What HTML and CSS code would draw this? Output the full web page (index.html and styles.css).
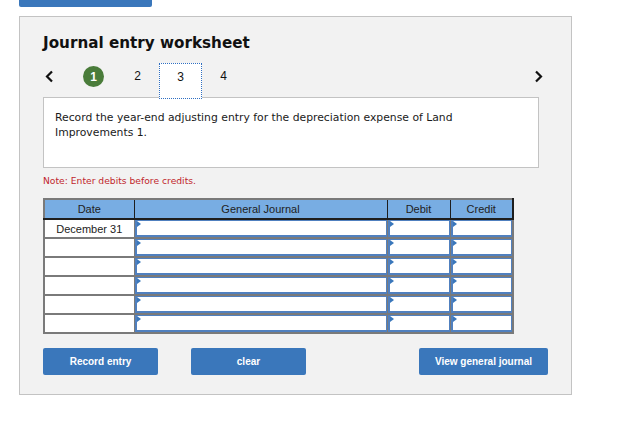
FILE: index.html
```html
<!DOCTYPE html>
<html>
<head>
<meta charset="utf-8">
<link rel="stylesheet" href="styles.css">
</head>
<body>
<div class="topbar"></div>
<div class="panel">
  <h1 class="title">Journal entry worksheet</h1>
  <div class="nav">
    <span class="prev"><svg width="9" height="13" viewBox="0 0 9 13"><path d="M7 1.5 L2 6.5 L7 11.5" fill="none" stroke="#111" stroke-width="2.2"/></svg></span>
    <span class="done">1</span>
    <span class="step">2</span>
    <span class="step current">3</span>
    <span class="step">4</span>
    <span class="next"><svg width="9" height="13" viewBox="0 0 9 13"><path d="M2 1.5 L7 6.5 L2 11.5" fill="none" stroke="#111" stroke-width="2.2"/></svg></span>
  </div>
  <div class="prompt">Record the year-end adjusting entry for the depreciation expense of Land Improvements 1.</div>
  <div class="note">Note: Enter debits before credits.</div>
  <table class="journal">
    <colgroup><col class="c-date"><col class="c-gj"><col class="c-amt"><col class="c-amt"></colgroup>
    <thead>
      <tr><th>Date</th><th>General Journal</th><th>Debit</th><th>Credit</th></tr>
    </thead>
    <tbody>
      <tr><td class="date">December 31</td><td><div class="inp"></div></td><td><div class="inp"></div></td><td><div class="inp"></div></td></tr>
      <tr><td class="date"></td><td><div class="inp"></div></td><td><div class="inp"></div></td><td><div class="inp"></div></td></tr>
      <tr><td class="date"></td><td><div class="inp"></div></td><td><div class="inp"></div></td><td><div class="inp"></div></td></tr>
      <tr><td class="date"></td><td><div class="inp"></div></td><td><div class="inp"></div></td><td><div class="inp"></div></td></tr>
      <tr><td class="date"></td><td><div class="inp"></div></td><td><div class="inp"></div></td><td><div class="inp"></div></td></tr>
      <tr><td class="date"></td><td><div class="inp"></div></td><td><div class="inp"></div></td><td><div class="inp"></div></td></tr>
    </tbody>
  </table>
  <div class="buttons">
    <button class="btn b-record">Record entry</button>
    <button class="btn b-clear">clear</button>
    <button class="btn b-view">View general journal</button>
  </div>
</div>
</body>
</html>
```
FILE: styles.css
```css
html, body {
  margin: 0;
  padding: 0;
  background: #ffffff;
}
body {
  font-family: "DejaVu Sans", Verdana, sans-serif;
  color: #1a1a1a;
}
.topbar {
  margin-left: 19px;
  width: 133px;
  height: 7px;
  background: #3a77bb;
  border-radius: 0 0 2px 2px;
}
.panel {
  margin-top: 9px;
  margin-left: 19px;
  width: 500px;
  height: 361px;
  padding: 16px 28px 0 23px;
  background: #f2f2f2;
  border: 1px solid #c3c3c3;
}
.title {
  margin: 0;
  font-size: 15.2px;
  font-weight: bold;
  line-height: 20px;
  height: 20px;
  color: #111;
}
.nav {
  margin-top: 10px;
  height: 36px;
  display: flex;
  align-items: flex-start;
  font-family: "Liberation Sans", Arial, sans-serif;
  font-size: 12px;
  color: #111;
}
.prev {
  margin-left: 2px;
  width: 10px;
  height: 26px;
  display: flex;
  align-items: center;
}
.done {
  margin-left: 28px;
  margin-top: 3px;
  width: 21px;
  height: 21px;
  border-radius: 50%;
  background: #4a7c3a;
  color: #fff;
  font-weight: bold;
  display: flex;
  align-items: center;
  justify-content: center;
}
.step {
  width: 43px;
  height: 26px;
  display: flex;
  align-items: center;
  justify-content: center;
  box-sizing: border-box;
}
.done + .step { margin-left: 12px; }
.current {
  height: 36px;
  padding-bottom: 9px;
  background: #fff;
  border: 1px dotted #2f6fc2;
  position: relative;
  z-index: 1;
}
.next {
  margin-left: auto;
  width: 9px;
  height: 26px;
  display: flex;
  align-items: center;
}
.prompt {
  margin-top: -2px;
  width: 472px;
  height: 57px;
  padding: 12px 11px 0 11px;
  background: #fff;
  border: 1px solid #c3c3c3;
  font-size: 10.8px;
  line-height: 15px;
  color: #1a1a1a;
}
.note {
  margin-top: 7px;
  font-size: 9.2px;
  line-height: 12px;
  color: #c1272d;
}
.journal {
  margin-top: 11px;
  width: 469px;
  border-collapse: collapse;
  table-layout: fixed;
  font-family: "Liberation Sans", Arial, sans-serif;
  font-size: 11px;
  border: 2px solid #7a7a7a;
}
.c-date { width: 90px; }
.c-gj { width: 253px; }
.c-amt { width: 63px; }
.journal th {
  height: 18px;
  padding: 0;
  background: #78ade3;
  color: #222;
  font-weight: normal;
  border-left: 1px solid #1e1e1e;
  border-bottom: 2px solid #1e1e1e;
  border-top: 2px solid #7a7a7a;
}
.journal th:first-child { border-left: 2px solid #7a7a7a; }
.journal th:last-child { border-right: 2px solid #1e1e1e; }
.journal td {
  height: 17px;
  padding: 0;
  background: #fff;
  border: 1px solid #7a7a7a;
  border-bottom: 2px solid #7a7a7a;
  vertical-align: top;
}
.journal td.date {
  text-align: center;
  vertical-align: middle;
  color: #222;
}
.inp {
  position: relative;
  height: 14px;
  border: 2px solid #5080bf;
  border-top-width: 1px;
  border-right-width: 1px;
  background: #fff;
}
.inp::before {
  content: "";
  position: absolute;
  left: 0;
  top: 0;
  width: 0;
  height: 0;
  border-left: 4px solid #3a77bb;
  border-top: 3px solid transparent;
  border-bottom: 3px solid transparent;
}
.buttons {
  margin-top: 14px;
  display: flex;
}
.btn {
  flex-shrink: 0;
  height: 27px;
  border: none;
  border-radius: 2px;
  background: #3a77bb;
  color: #fff;
  font-family: "Liberation Sans", Arial, sans-serif;
  font-weight: bold;
  font-size: 10px;
  padding: 0;
}
.b-record { width: 115px; }
.b-clear { width: 115px; margin-left: 33px; }
.b-view { width: 129px; margin-left: 113px; }
```
